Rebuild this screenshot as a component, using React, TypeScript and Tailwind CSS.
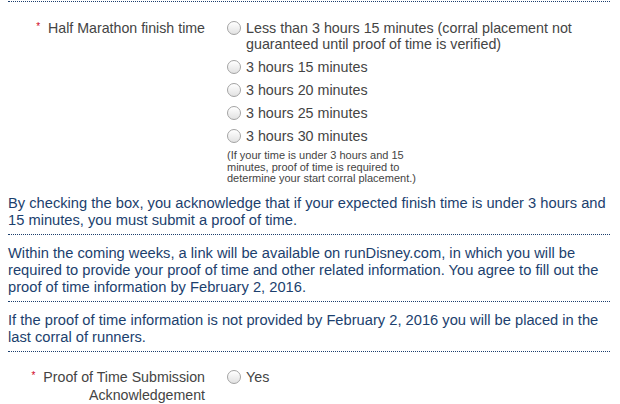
import React from "react";

const options = [
  "Less than 3 hours 15 minutes (corral placement not guaranteed until proof of time is verified)",
  "3 hours 15 minutes",
  "3 hours 20 minutes",
  "3 hours 25 minutes",
  "3 hours 30 minutes",
];

function Radio() {
  return (
    <span className="mt-[1px] inline-block h-[14px] w-[14px] shrink-0 rounded-full border border-[#a3a3a3] bg-linear-to-b from-white to-[#e2e2e2] shadow-[inset_0_1px_1px_rgba(255,255,255,0.9)]" />
  );
}

function Label({ children }: { children: React.ReactNode }) {
  return (
    <div className="w-[205px] shrink-0 pr-[8px] text-right text-[14.2px] leading-[17px] text-[#444]">
      <span className="relative -top-[3px] mr-[8px] text-[10px] text-[#d0021b]">*</span>
      {children}
    </div>
  );
}

export default function App() {
  return (
    <div
      className="h-[404px] w-[620px] overflow-hidden bg-white"
      style={{ fontFamily: '"Liberation Sans", Arial, sans-serif' }}
    >
      <div className="ml-[8px] w-[602px] border-t border-dotted border-[#1c3f6e] mt-[1px]">
        {/* finish time row */}
        <div className="flex pt-[18px]">
          <Label>Half Marathon finish time</Label>
          <div className="ml-[14px] flex-1">
            {options.map((o) => (
              <label key={o} className="mb-[7px] flex gap-[5px] text-[14.3px] leading-[16px] text-[#444]">
                <Radio />
                <span>{o}</span>
              </label>
            ))}
            <p className="-mt-[1px] w-[190px] text-[11px] leading-[11.5px] text-[#444]">
              (If your time is under 3 hours and 15 minutes, proof of time is required to determine your start corral placement.)
            </p>
          </div>
        </div>

        <p className="border-b border-dotted border-[#1c3f6e] pt-[10px] pb-[5px] text-[14.7px] leading-[17px] text-[#1c3f6e]">
          By checking the box, you acknowledge that if your expected finish time is under 3 hours and 15 minutes, you must submit a proof of time.
        </p>
        <p className="border-b border-dotted border-[#1c3f6e] pt-[10px] pb-[5px] text-[14.7px] leading-[17px] text-[#1c3f6e]">
          Within the coming weeks, a link will be available on runDisney.com, in which you will be required to provide your proof of time and other related information. You agree to fill out the proof of time information by February 2, 2016.
        </p>
        <p className="border-b border-dotted border-[#1c3f6e] pt-[10px] pb-[5px] text-[14.7px] leading-[17px] text-[#1c3f6e]">
          If the proof of time information is not provided by February 2, 2016 you will be placed in the last corral of runners.
        </p>

        {/* acknowledgement row */}
        <div className="flex pt-[17px]">
          <Label>
            Proof of Time Submission
            <br />
            Acknowledgement
          </Label>
          <div className="ml-[14px] flex-1">
            <label className="flex gap-[5px] text-[14.3px] leading-[16px] text-[#444]">
              <Radio />
              <span>Yes</span>
            </label>
          </div>
        </div>
      </div>
    </div>
  );
}
